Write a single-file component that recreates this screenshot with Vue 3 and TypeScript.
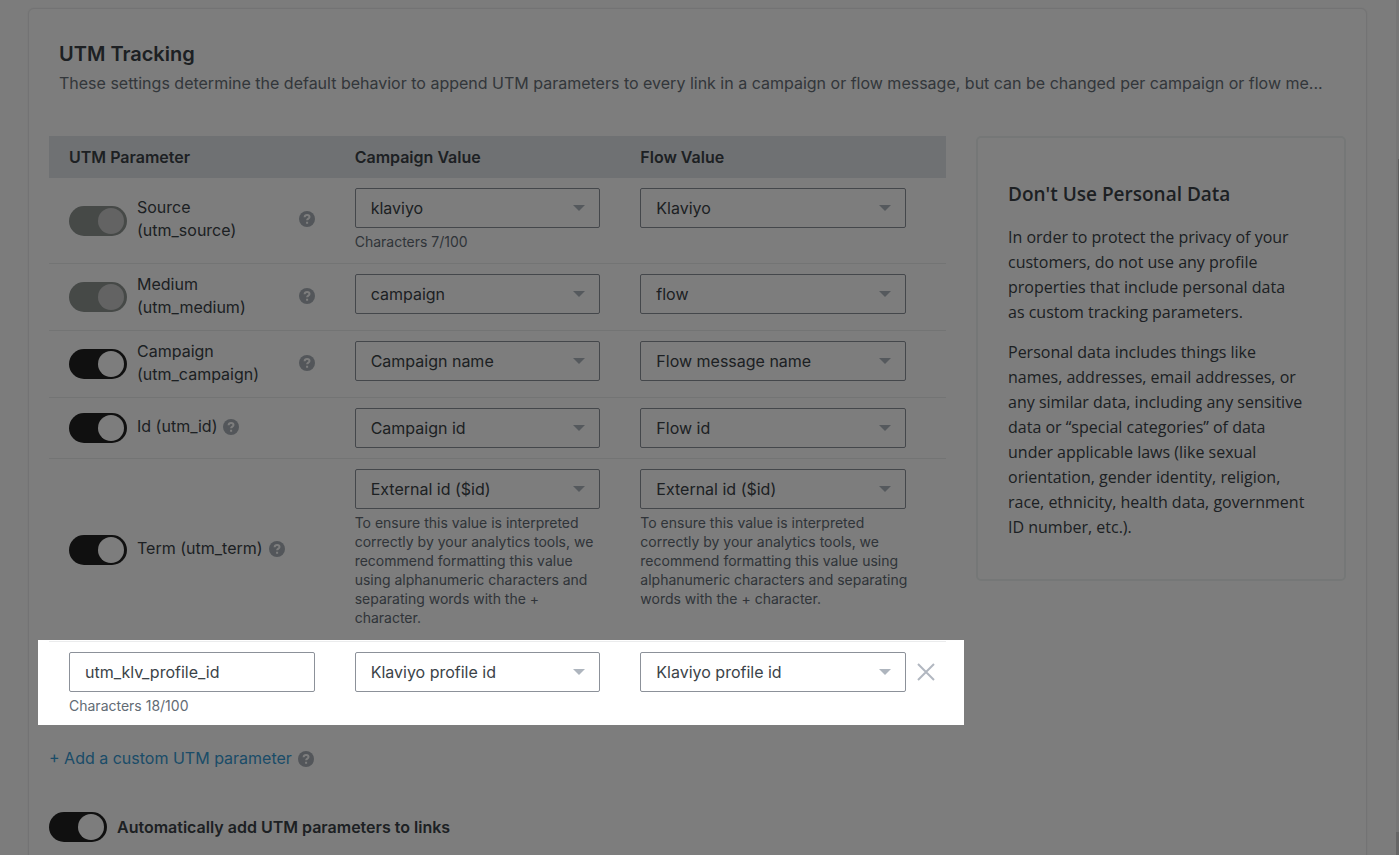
<script setup lang="ts">
import { ref } from 'vue'

interface Row {
  key: string
  label: string
  param: string
  stacked: boolean
  on: boolean
  locked: boolean
  campaign: string
  flow: string
  campaignNote?: string
  flowNote?: string
  size: string
}

const formatNote =
  'To ensure this value is interpreted correctly by your analytics tools, we recommend formatting this value using alphanumeric characters and separating words with the + character.'

const rows = ref<Row[]>([
  { key: 'source', label: 'Source', param: '(utm_source)', stacked: true, on: true, locked: true, campaign: 'klaviyo', flow: 'Klaviyo', campaignNote: 'Characters 7/100', size: 'noted' },
  { key: 'medium', label: 'Medium', param: '(utm_medium)', stacked: true, on: true, locked: true, campaign: 'campaign', flow: 'flow', size: 'double' },
  { key: 'campaign', label: 'Campaign', param: '(utm_campaign)', stacked: true, on: true, locked: false, campaign: 'Campaign name', flow: 'Flow message name', size: 'double' },
  { key: 'id', label: 'Id', param: '(utm_id)', stacked: false, on: true, locked: false, campaign: 'Campaign id', flow: 'Flow id', size: 'single' },
  { key: 'term', label: 'Term', param: '(utm_term)', stacked: false, on: true, locked: false, campaign: 'External id ($id)', flow: 'External id ($id)', campaignNote: formatNote, flowNote: formatNote, size: 'long' },
])

const customName = ref('utm_klv_profile_id')
const autoAdd = ref(true)
</script>

<template>
  <div class="page">
    <main class="card">
      <header class="intro">
        <h1>UTM Tracking</h1>
        <p>These settings determine the default behavior to append UTM parameters to every link in a campaign or flow message, but can be changed per campaign or flow me...</p>
      </header>

      <div class="columns">
        <section>
          <table>
            <colgroup>
              <col />
              <col />
              <col />
              <col class="action-col" />
            </colgroup>
            <thead>
              <tr>
                <th scope="col">UTM Parameter</th>
                <th scope="col">Campaign Value</th>
                <th scope="col">Flow Value</th>
                <td></td>
              </tr>
            </thead>
            <tbody>
              <tr v-for="row in rows" :key="row.key" :class="row.size">
                <td class="name-cell">
                  <div class="name">
                    <input :id="`toggle-${row.key}`" v-model="row.on" type="checkbox" class="toggle" :disabled="row.locked" />
                    <div class="caption" :class="{ stacked: row.stacked }">
                      <label :for="`toggle-${row.key}`">
                        <span>{{ row.label }}</span> <span>{{ row.param }}</span>
                      </label>
                      <button type="button" class="help" :aria-label="`About ${row.label}`">
                        <svg viewBox="0 0 16 16"><circle cx="8" cy="8" r="8" /><path d="M5.600 6.200C5.700 4.700 6.700 3.900 8.100 3.900c1.400 0 2.400.8 2.400 2 0 1.700-2.400 1.700-2.400 3.400M8.100 10.800v1.900" /></svg>
                      </button>
                    </div>
                  </div>
                </td>
                <td>
                  <div class="select">
                    <select :aria-label="`${row.label} campaign value`"><option>{{ row.campaign }}</option></select>
                    <svg viewBox="0 0 12 6"><path d="M0 0h12L6 6z" /></svg>
                  </div>
                  <p v-if="row.campaignNote" class="note">{{ row.campaignNote }}</p>
                </td>
                <td>
                  <div class="select">
                    <select :aria-label="`${row.label} flow value`"><option>{{ row.flow }}</option></select>
                    <svg viewBox="0 0 12 6"><path d="M0 0h12L6 6z" /></svg>
                  </div>
                  <p v-if="row.flowNote" class="note wide">{{ row.flowNote }}</p>
                </td>
                <td></td>
              </tr>
              <tr class="custom">
                <td class="spotlight">
                  <input v-model="customName" type="text" class="text" aria-label="Custom parameter name" />
                  <p class="note">Characters {{ customName.length }}/100</p>
                </td>
                <td>
                  <div class="select">
                    <select aria-label="Custom campaign value"><option>Klaviyo profile id</option></select>
                    <svg viewBox="0 0 12 6"><path d="M0 0h12L6 6z" /></svg>
                  </div>
                </td>
                <td>
                  <div class="select">
                    <select aria-label="Custom flow value"><option>Klaviyo profile id</option></select>
                    <svg viewBox="0 0 12 6"><path d="M0 0h12L6 6z" /></svg>
                  </div>
                </td>
                <td class="action">
                  <button type="button" class="remove" aria-label="Remove parameter">
                    <svg viewBox="0 0 18 18"><path d="M1 1l16 16M17 1L1 17" /></svg>
                  </button>
                </td>
              </tr>
            </tbody>
          </table>

          <div class="add">
            <a href="#add">+ Add a custom UTM parameter</a>
            <button type="button" class="help" aria-label="About custom parameters">
              <svg viewBox="0 0 16 16"><circle cx="8" cy="8" r="8" /><path d="M5.600 6.200C5.700 4.700 6.700 3.900 8.100 3.900c1.400 0 2.400.8 2.400 2 0 1.700-2.400 1.700-2.400 3.400M8.100 10.800v1.900" /></svg>
            </button>
          </div>

          <div class="auto">
            <input id="auto-add" v-model="autoAdd" type="checkbox" class="toggle" />
            <label for="auto-add">Automatically add UTM parameters to links</label>
          </div>
        </section>

        <aside>
          <h2>Don't Use Personal Data</h2>
          <p>In order to protect the privacy of your customers, do not use any profile properties that include personal data as&nbsp;custom tracking parameters.</p>
          <p>Personal data includes things like names, addresses, email addresses, or any similar data, including any sensitive data or “special categories” of data under applicable laws (like sexual orientation, gender identity, religion, race, ethnicity, health data, government ID number, etc.).</p>
        </aside>
      </div>
    </main>
    <div class="rail"><div class="thumb"></div><div class="end"></div></div>
  </div>
</template>

<style>
body {
  margin: 0;
  background: #fdfdfd;
}
</style>

<style scoped>
.page {
  box-sizing: border-box;
  display: grid;
  grid-template-columns: minmax(0, 1fr) 3px;
  column-gap: 29px;
  height: 100vh;
  padding-left: 28px;
  overflow: hidden;
  font-family: Inter, "Liberation Sans", sans-serif;
  font-size: 16px;
  line-height: 23px;
  color: #3b4348;
}
.card {
  box-sizing: border-box;
  margin-top: 8px;
  padding: 33px 20px 40px;
  height: max-content;
  border: 1px solid #eaebec;
  border-radius: 6px;
  background: #fff;
  box-shadow: 0 0 2px rgba(0, 0, 0, 0.08);
}
h1, h2, p {
  margin: 0;
}
.intro {
  padding: 0 10px;
}
h1 {
  font-size: 20px;
  line-height: 24px;
  font-weight: 600;
}
.intro p {
  margin-top: 5px;
  line-height: 24px;
  color: #687078;
  overflow: hidden;
  white-space: nowrap;
  text-overflow: ellipsis;
}
.columns {
  display: grid;
  grid-template-columns: minmax(0, 1fr) 370px;
  column-gap: 30px;
  align-items: start;
  margin-top: 41px;
}
table {
  width: 100%;
  table-layout: fixed;
  border-collapse: separate;
  border-spacing: 0;
}
.action-col {
  width: 40px;
}
thead {
  background: #e3e6ea;
}
th {
  box-sizing: border-box;
  height: 42px;
  padding: 0 20px;
  text-align: left;
  font-weight: 600;
}
thead td {
  padding: 0;
}
tbody td {
  box-sizing: border-box;
  padding: 10px 20px;
  vertical-align: top;
  border-bottom: 1px solid #ebeced;
}
tbody td:nth-child(3) {
  padding-right: 0;
}
th:nth-child(3) {
  padding-right: 0;
}
tbody td:nth-child(4) {
  padding: 10px 0;
}
tbody .name-cell {
  vertical-align: middle;
  padding-top: 8px;
  padding-bottom: 8px;
}
.noted {
  height: 86px;
}
.double {
  height: 67px;
}
.single {
  height: 61px;
}
.long {
  height: 183px;
}
.custom {
  position: relative;
  height: 84px;
}
.custom td {
  border-bottom: 0;
}
/* Spotlight: everything outside the custom row is dimmed */
.spotlight::after {
  content: "";
  position: absolute;
  z-index: 5;
  inset: -2px -18px 1px -11px;
  box-shadow: 0 0 0 2000px rgba(0, 0, 0, 0.51);
  pointer-events: none;
}
.name {
  display: flex;
  align-items: center;
}
.caption {
  display: flex;
  align-items: center;
  margin-left: 10px;
  padding-bottom: 3px;
  white-space: nowrap;
}
.stacked {
  flex: 1;
  justify-content: space-between;
}
.stacked span {
  display: block;
}
.toggle {
  appearance: none;
  box-sizing: border-box;
  display: flex;
  flex: none;
  width: 58px;
  height: 30px;
  margin: 0;
  padding: 2px 3px;
  border-radius: 15px;
  background: #b4b8bb;
}
.toggle::before {
  content: "";
  width: 26px;
  height: 26px;
  border-radius: 50%;
  background: #fff;
}
.toggle:checked {
  justify-content: flex-end;
  background: #222;
}
.toggle:disabled {
  background: #8f9592;
}
.toggle:disabled::before {
  background: #cacaca;
}
.help {
  flex: none;
  width: 16px;
  height: 16px;
  margin-left: 6px;
  padding: 0;
  border: 0;
  background: none;
}
.help svg, .remove svg {
  display: block;
  width: 100%;
  height: 100%;
}
.help circle {
  fill: #a9b0b7;
}
.help path {
  fill: none;
  stroke: #fff;
  stroke-width: 2;
}
.select {
  display: grid;
  grid-template-columns: minmax(0, 1fr) 27px;
  align-items: center;
}
.select svg {
  grid-area: 1 / 2;
  width: 12px;
  height: 6px;
  pointer-events: none;
}
.select path {
  fill: #aeb5be;
}
.select select, .text {
  box-sizing: border-box;
  width: 100%;
  height: 40px;
  margin: 0;
  padding: 0 15px;
  border: 1px solid #8c9199;
  border-radius: 2px;
  background: #fff;
  color: inherit;
  font: inherit;
}
.select select {
  grid-area: 1 / 1 / 2 / 3;
  appearance: none;
}
.text {
  display: block;
}
.note {
  margin-top: 4px;
  font-size: 14px;
  line-height: 19px;
  color: #626b74;
}
.wide {
  margin-right: -16px;
}
.action {
  text-align: center;
}
.remove {
  width: 40px;
  height: 40px;
  padding: 11px;
  border: 0;
  background: none;
}
.remove path {
  fill: none;
  stroke: #b1b7c0;
  stroke-width: 2;
}
.add {
  display: flex;
  align-items: center;
  margin-top: 21px;
}
.add a {
  color: #379bd4;
  text-decoration: none;
}
.auto {
  display: flex;
  align-items: center;
  gap: 10px;
  margin-top: 42px;
  font-weight: 600;
}
aside {
  border: 2px solid #eef3f2;
  border-radius: 5px;
  padding: 43px 35px 39px 30px;
  font-family: "Open Sans", "Noto Sans", sans-serif;
  font-size: 16px;
  line-height: 25px;
}
h2 {
  margin-bottom: 18px;
  font-size: 19px;
  line-height: 26px;
  font-weight: 600;
}
aside p + p {
  margin-top: 15px;
}
.rail {
  display: flex;
  flex-direction: column;
  height: 100vh;
  align-items: flex-end;
  justify-content: flex-end;
  background: #f1f1f1;
}
.thumb {
  width: 1px;
  height: 68%;
  margin-bottom: 92px;
  background: #c1c1c1;
}
.end {
  width: 3px;
  height: 23px;
  background: #d0d0d0;
}
</style>
